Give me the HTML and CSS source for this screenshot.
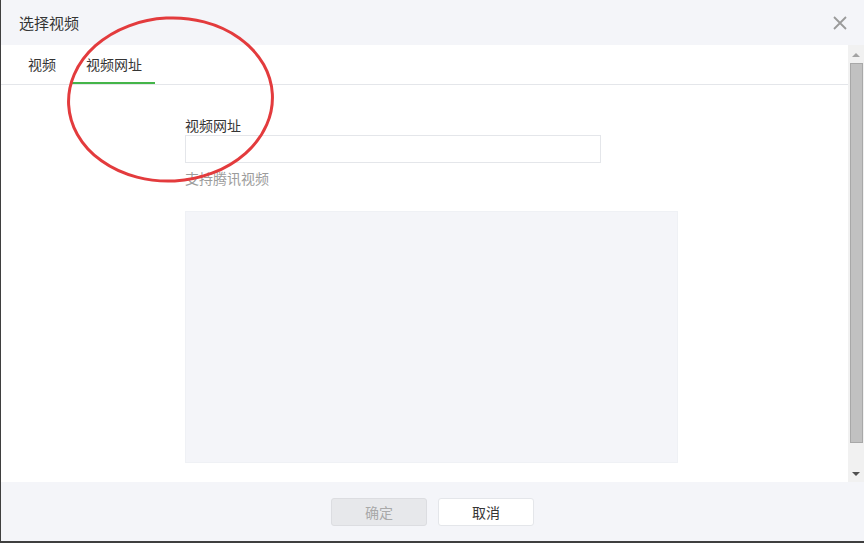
FILE: index.html
```html
<!DOCTYPE html>
<html lang="zh-CN">
<head>
<meta charset="utf-8">
<title>选择视频</title>
<link rel="stylesheet" href="styles.css">
</head>
<body>
<div class="dialog">
  <div class="dialog-head">
    <h3 class="dialog-title">选择视频</h3>
    <span class="close" aria-label="关闭">
      <svg width="14" height="14" viewBox="0 0 14 14"><path d="M1 1L13 13M13 1L1 13" stroke="#9a9a9a" stroke-width="1.8" fill="none"/></svg>
    </span>
  </div>
  <div class="dialog-middle">
    <div class="main">
      <div class="tabs">
        <a class="tab">视频</a>
        <a class="tab active">视频网址</a>
      </div>
      <div class="content">
        <div class="label">视频网址</div>
        <input class="url-input" type="text">
        <div class="hint">支持腾讯视频</div>
        <div class="preview"></div>
      </div>
    </div>
    <div class="scrollbar">
      <div class="sb-btn"><span class="arrow-up"></span></div>
      <div class="sb-thumb"></div>
      <div class="sb-space"></div>
      <div class="sb-btn"><span class="arrow-down"></span></div>
    </div>
  </div>
  <div class="dialog-foot">
    <button class="btn btn-disabled">确定</button>
    <button class="btn btn-default">取消</button>
  </div>
  <svg class="annotation" width="864" height="543" viewBox="0 0 864 543">
    <ellipse cx="170.5" cy="99.5" rx="102" ry="81.5" fill="none" stroke="#e33b3d" stroke-width="3" transform="rotate(-3 170.5 99.5)"/>
  </svg>
</div>
</body>
</html>
```

FILE: styles.css
```css
* { box-sizing: border-box; }
html, body {
  margin: 0;
  padding: 0;
  width: 864px;
  height: 543px;
  overflow: hidden;
  background: #fff;
  font-family: "Noto Sans CJK SC", "Microsoft YaHei", sans-serif;
  font-size: 14px;
  color: #353535;
}
.dialog {
  position: relative;
  width: 864px;
  height: 543px;
  display: flex;
  flex-direction: column;
  border-left: 1px solid #3f3f3f;
  border-bottom: 2px solid #3f3f3f;
}
.dialog-head {
  height: 45px;
  flex: none;
  background: #f4f5f9;
  display: flex;
  align-items: center;
  justify-content: space-between;
  padding: 0 17px 0 18px;
}
.dialog-title {
  margin: 0;
  font-size: 15px;
  font-weight: normal;
  line-height: 20px;
  color: #353535;
}
.close {
  display: flex;
  width: 14px;
  height: 14px;
}
.dialog-middle {
  flex: 1;
  display: flex;
  min-height: 0;
}
.main {
  flex: 1;
  display: flex;
  flex-direction: column;
  background: #fff;
}
.tabs {
  height: 40px;
  flex: none;
  display: flex;
  border-bottom: 1px solid #e4e6ea;
  padding-left: 13px;
}
.tab {
  display: block;
  padding: 0 14px;
  line-height: 39px;
  color: #353535;
  cursor: pointer;
}
.tab + .tab { margin-left: 2px; padding-right: 13px; }
.tab.active {
  box-shadow: inset 0 -2px 0 #44b549;
  height: 39px;
}
.content {
  flex: 1;
  padding: 30px 0 0 184px;
}
.label {
  line-height: 20px;
}
.url-input {
  display: block;
  width: 416px;
  height: 28px;
  border: 1px solid #e4e6ea;
  outline: none;
  margin: 0;
  padding: 0 8px;
  font: inherit;
}
.hint {
  margin-top: 5px;
  line-height: 20px;
  color: #9c9c9c;
}
.preview {
  margin-top: 23px;
  width: 493px;
  height: 252px;
  background: #f4f5f9;
  border: 1px solid #eff1f5;
}
.scrollbar {
  width: 16px;
  flex: none;
  background: #f1f1f1;
  display: flex;
  flex-direction: column;
  padding-top: 2px;
}
.sb-btn {
  height: 16px;
  flex: none;
  display: flex;
  align-items: center;
  justify-content: center;
}
.arrow-up {
  width: 0; height: 0;
  border-left: 4px solid transparent;
  border-right: 4px solid transparent;
  border-bottom: 4px solid #a3a3a3;
}
.arrow-down {
  width: 0; height: 0;
  border-left: 4px solid transparent;
  border-right: 4px solid transparent;
  border-top: 4px solid #505050;
}
.sb-thumb {
  height: 380px;
  margin: 0 1px 0 2px;
  background: #c1c1c1;
  border: 1px solid #a8a8a8;
  flex: none;
}
.sb-space { flex: 1; }
.dialog-foot {
  height: 59px;
  flex: none;
  background: #f4f5f9;
  display: flex;
  justify-content: center;
  align-items: flex-start;
  padding-top: 16px;
  gap: 11px;
}
.btn {
  width: 96px;
  height: 28px;
  border-radius: 3px;
  font: inherit;
  font-size: 14px;
  padding: 0;
  margin: 0;
}
.btn-disabled {
  background: #e7e8eb;
  border: 1px solid #dcdde1;
  color: #a9a9a9;
}
.btn-default {
  background: #fff;
  border: 1px solid #e4e6ea;
  color: #353535;
}
.annotation {
  position: absolute;
  left: -1px;
  top: 0;
  pointer-events: none;
}
```
